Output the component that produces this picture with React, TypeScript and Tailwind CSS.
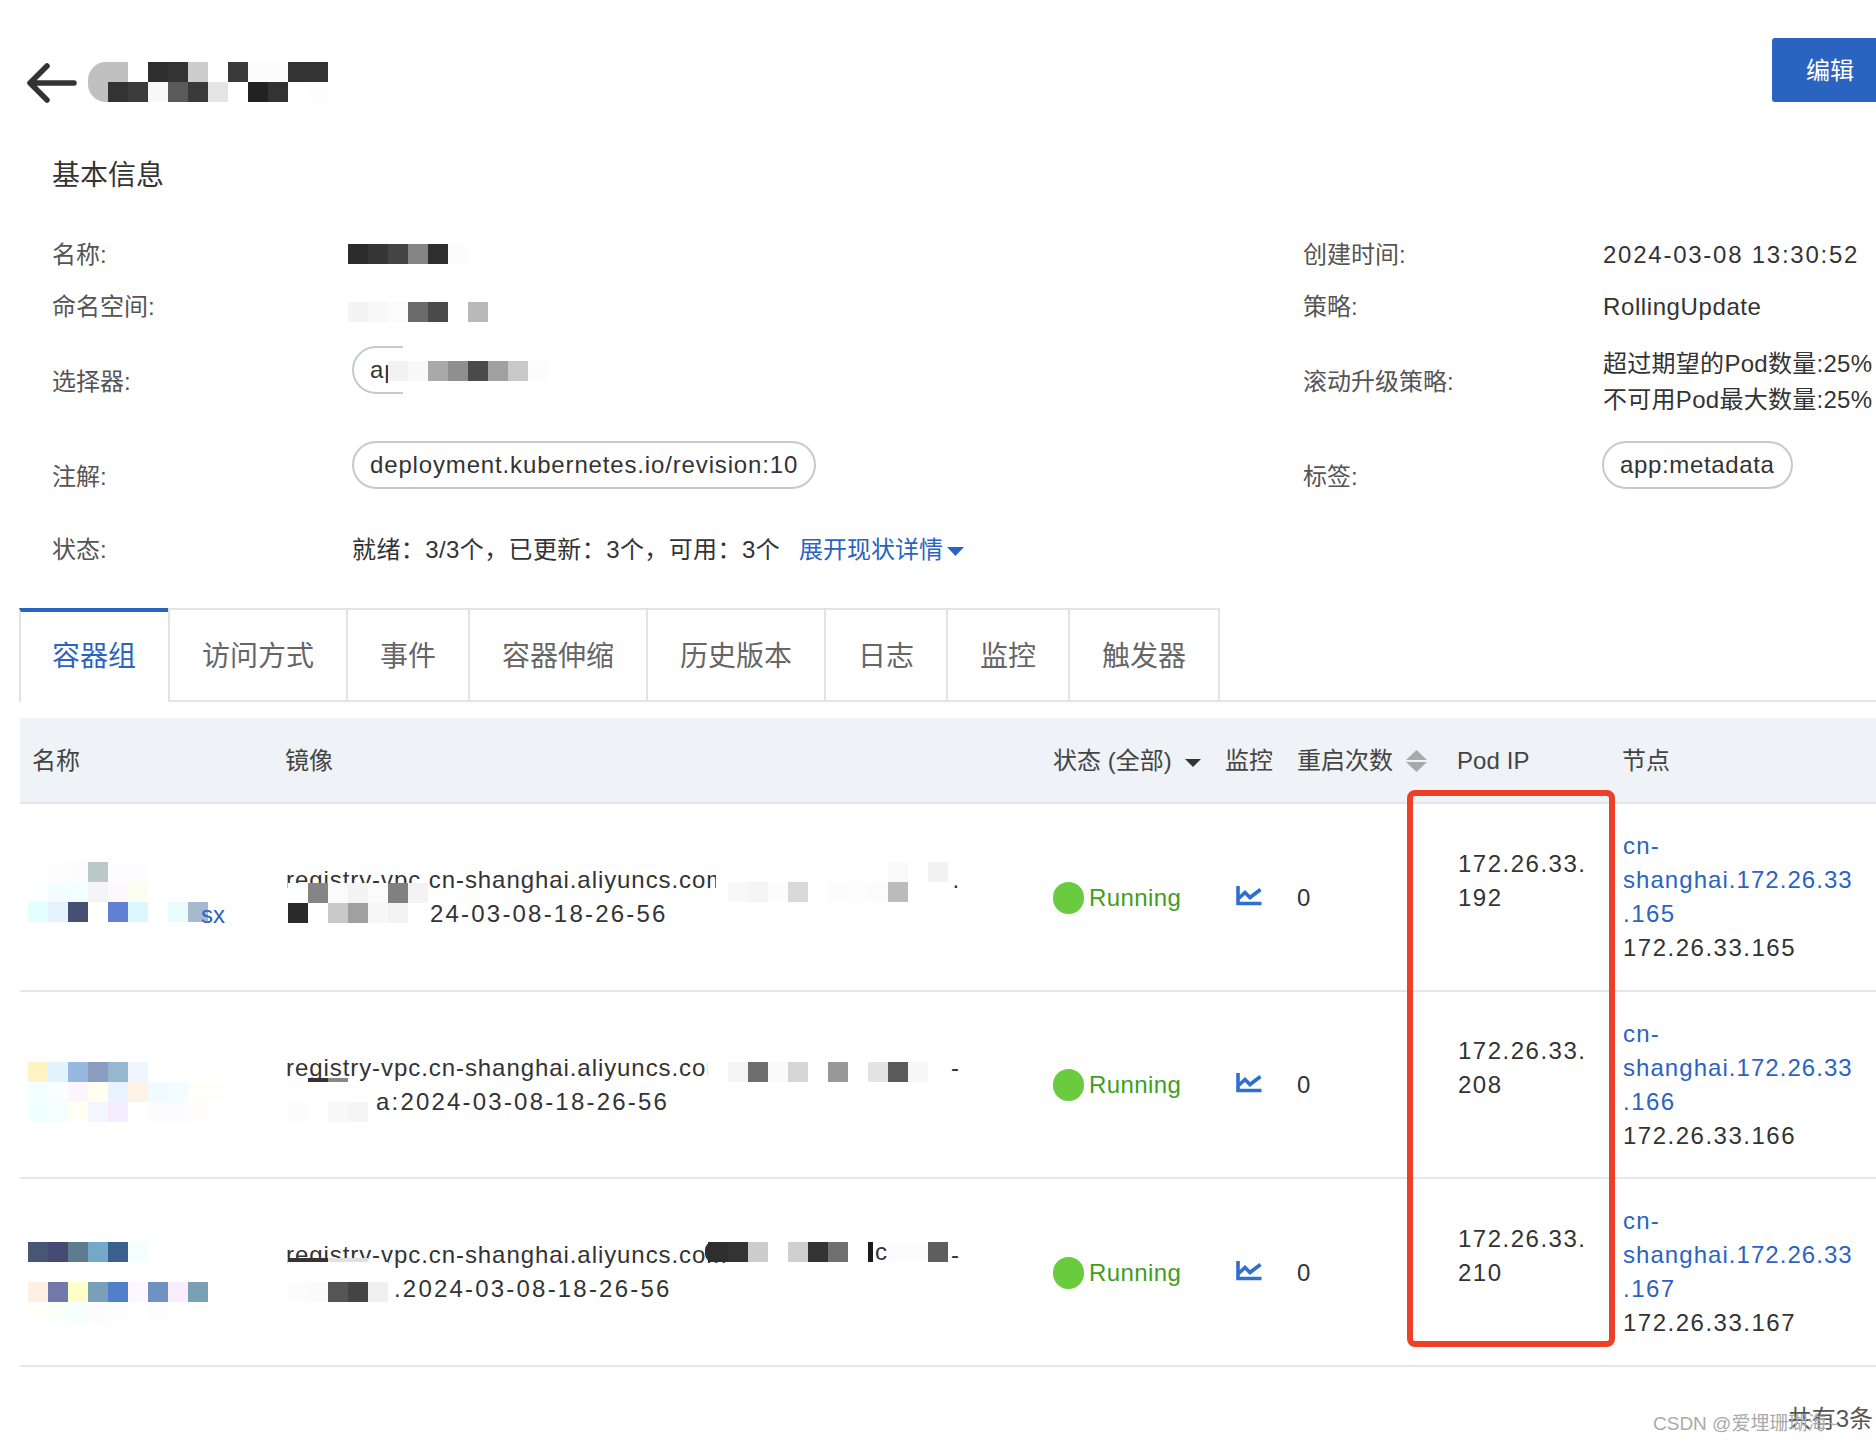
import type { ReactNode } from "react";

const BLUE = "text-[#2b63c1]";

const Mosaic = ({ rows, className }: { rows: string[][]; className: string }) => (
  <div className={className}>
    {rows.map((row, i) => (
      <div key={i} className="flex">
        {row.map((c, j) => (
          <div key={j} className="w-5 h-5 shrink-0" style={{ backgroundColor: c }} />
        ))}
      </div>
    ))}
  </div>
);

const Tag = ({ children, className = "" }: { children: ReactNode; className?: string }) => (
  <span className={`inline-flex items-center h-12 mb-[22px] px-4 rounded-full border-2 border-[#c6cad0] text-[#333] tracking-[0.85px] ${className}`}>
    {children}
  </span>
);

const Label = ({ children }: { children: ReactNode }) => <div className="pt-[2px] text-[#555]">{children}</div>;

const tabs = ["访问方式", "事件", "容器伸缩", "历史版本", "日志", "监控", "触发器"];

const ChartIcon = () => (
  <svg width="26" height="20" viewBox="0 0 26 20" fill="none" stroke="#2f6fce" strokeWidth="3.6">
    <path d="M2 0V17.5H25.5" />
    <path d="M2.5 12.5L9 6.5L14 11.5L24.5 3.5" />
  </svg>
);

const columns = "grid grid-cols-[266px_767px_172px_72px_160px_165px_254px]";

const PodRow = ({
  name,
  image,
  ip,
  node,
}: {
  name: ReactNode;
  image: ReactNode;
  ip: [string, string];
  node: string;
}) => (
  <div className={`${columns} h-[187.5px] border-b-2 border-[#e3e6ea] items-center`}>
    <div className="relative h-full">{name}</div>
    <div className="relative h-full pt-[1px] flex flex-col justify-center">{image}</div>
    <div className="flex items-center pt-[2px]">
      <span className="w-[31px] h-8 rounded-full bg-[#6acb3e]" />
      <span className="ml-[5px] text-[#3f9e1e] tracking-[0.4px]">Running</span>
    </div>
    <div className="pl-[11px] pb-[2px]">
      <ChartIcon />
    </div>
    <div className="pt-[2px] text-[#333]">0</div>
    <div className="pl-[1px] pb-[32px] text-[#333] tracking-[1.5px]">
      {ip[0]}
      <br />
      {ip[1]}
    </div>
    <div className="pl-[1px] pt-[1px]">
      <div className={`${BLUE} tracking-[1.2px]`}>cn-</div>
      <div className={`${BLUE} tracking-[1.05px]`}>shanghai.172.26.33</div>
      <div className={`${BLUE} tracking-[1.5px]`}>.{node}</div>
      <div className="text-[#333] tracking-[1.5px]">172.26.33.{node}</div>
    </div>
  </div>
);

const ImageLines = ({ end, tail, indent }: { end: string; tail: string; indent: string }) => (
  <>
    <div className="flex justify-between w-[674px] text-[#333] tracking-[0.93px]">
      <span>registry-vpc.cn-shanghai.aliyuncs.com</span>
      <span>{end}</span>
    </div>
    <div className={`${indent} text-[#333] tracking-[2.2px]`}>{tail}</div>
  </>
);

export default function App() {
  return (
    <div className="relative w-[1876px] h-[1442px] overflow-hidden bg-white text-[24px] leading-[34px] [font-family:'Liberation_Sans','Noto_Sans_CJK_SC',sans-serif]">
      {/* header */}
      <div className="flex justify-between h-[102px] pt-[38px]">
        <div className="flex pt-6 pl-[27px]">
          <svg width="50" height="40" viewBox="0 0 50 40" fill="none" stroke="#333" strokeWidth="5.5" strokeLinecap="round" strokeLinejoin="round" className="mt-[1px]">
            <path d="M20 3L3 20L20 37M3 20H47" />
          </svg>
          <Mosaic
            className="ml-[11px] overflow-hidden rounded-l-[18px]"
            rows={[
              ["#c0c0c0", "#c0c0c0", "#fff", "#2e2e2e", "#333", "#ccc", "#fff", "#3a3a3a", "#fcfcfc", "#fcfcfc", "#333", "#333"],
              ["#c0c0c0", "#333", "#3c3c3c", "#f8f8f8", "#5a5a5a", "#3a3a3a", "#e5e5e5", "#fff", "#222", "#333", "#fff", "#fdfdfd"],
            ]}
          />
        </div>
        <button className="w-[104px] h-16 pl-[34px] pt-[2px] text-left rounded-l-[3px] bg-[#2b63c1] text-white">编辑</button>
      </div>

      <div className="h-[126px] pt-[58px] pl-[52px] text-[28px] leading-8 text-[#333]">基本信息</div>

      {/* basic info */}
      <div className="grid grid-cols-[296px_955px_300px_1fr] grid-rows-[52px_52px_98px_92px_54px] items-center pl-[52px] h-[348px]">
        <Label>名称:</Label>
        <Mosaic className="" rows={[["#2b2b2b", "#363636", "#444", "#858585", "#2e2e2e", "#fcfcfc"]]} />
        <Label>创建时间:</Label>
        <div className="pt-[2px] text-[#333] tracking-[1.75px]">2024-03-08 13:30:52</div>

        <Label>命名空间:</Label>
        <Mosaic className="mt-3" rows={[["#f4f4f4", "#f8f8f8", "#fbfbfb", "#6b6b6b", "#4a4a4a", "#fff", "#b9b9b9"]]} />
        <Label>策略:</Label>
        <div className="pt-[2px] text-[#333] tracking-[0.6px]">RollingUpdate</div>

        <Label>选择器:</Label>
        <div className="relative pl-1">
          <Tag>app:metadata</Tag>
          <div className="absolute left-[55px] top-[-8px] w-[180px] h-[72px] bg-white" />
          <div className="absolute left-[40px] top-[15px] w-5 h-[30px] bg-white" />
          <Mosaic className="absolute left-[40px] top-[15px]" rows={[["#f2f2f2", "#f9f9f9", "#a9a9a9", "#8f8f8f", "#4a4a4a", "#a0a0a0", "#c9c9c9", "#fcfcfc"]]} />
        </div>
        <Label>滚动升级策略:</Label>
        <div className="pt-[2px] text-[#333] leading-[36px] tracking-[0.28px] whitespace-nowrap">
          超过期望的Pod数量:25%
          <br />
          不可用Pod最大数量:25%
        </div>

        <Label>注解:</Label>
        <div className="pl-1">
          <Tag>deployment.kubernetes.io/revision:10</Tag>
        </div>
        <Label>标签:</Label>
        <div className="-ml-[1px]">
          <Tag>
            <span className="tracking-[0.65px]">app:metadata</span>
          </Tag>
        </div>

        <Label>状态:</Label>
        <div className="pl-1 pt-[2px] flex items-center text-[#333] tracking-[0.4px]">
          就绪：3/3个，已更新：3个，可用：3个
          <span className={`ml-[19px] ${BLUE} tracking-normal`}>展开现状详情</span>
          <svg width="17" height="9" viewBox="0 0 17 9" className="ml-1 mt-[3px]">
            <path d="M0 0H17L8.5 9Z" fill="#2b63c1" />
          </svg>
        </div>
      </div>

      {/* tabs */}
      <div className="flex ml-[19px] mt-8 h-[94px] border-b-2 border-[#e3e3e3] text-[28px] text-[#666]">
        <div className={`h-[94px] pl-[31px] pr-8 border-l-2 border-l-[#e3e3e3] border-t-4 border-t-[#2b63c1] bg-white flex items-center ${BLUE}`}>容器组</div>
        {tabs.map((t) => (
          <div key={t} className="px-8 pt-1 flex items-center border-t-2 border-r-2 [&:nth-child(2)]:border-l-2 border-[#e3e3e3]">
            {t}
          </div>
        ))}
      </div>

      {/* table */}
      <div className="ml-5 mt-4">
        <div className={`${columns} h-[86px] pt-[2px] bg-[#eff2f7] border-b-2 border-[#e3e6ea] items-center text-[#444]`}>
          <div className="pl-3">名称</div>
          <div className="-ml-[1px]">镜像</div>
          <div className="flex items-center">
            状态 (全部)
            <svg width="16" height="8" viewBox="0 0 16 8" className="ml-[13px] mt-1">
              <path d="M0 0H16L8 8Z" fill="#333" />
            </svg>
          </div>
          <div>监控</div>
          <div className="flex items-center">
            重启次数
            <svg width="21" height="22" viewBox="0 0 21 22" className="ml-[13px]">
              <path d="M10.5 0L21 10H0Z" fill="#a9a9a9" />
              <path d="M0 12H21L10.5 22Z" fill="#a9a9a9" />
            </svg>
          </div>
          <div className="tracking-[0.1px]">Pod IP</div>
          <div>节点</div>
        </div>

        <PodRow
          ip={["172.26.33.", "192"]}
          node="165"
          name={
            <>
              <Mosaic
                className="absolute left-2 top-[58px]"
                rows={[
                  ["#fefefe", "#fdfdfd", "#fcfcfc", "#bcc7c7", "#fdfcfe", "#fdfcff"],
                  ["#fbfffe", "#f3fdff", "#f2feff", "#f5f5f5", "#fcf8fb", "#fbfdf0"],
                  ["#e3ffff", "#e6f3fc", "#474f75", "#fff", "#6080d4", "#def7ff", "#fff", "#e8fcff", "#a6b9d0"],
                ]}
              />
              <span className={`absolute left-[181px] top-[94px] ${BLUE}`}>sx</span>
            </>
          }
          image={
            <>
              <ImageLines end="." tail="24-03-08-18-26-56" indent="pl-[144px]" />
              <Mosaic
                className="absolute left-[2px] top-[79px]"
                rows={[
                  ["#fff", "#858585", "#fbfbfb", "#f3f3f3", "#fbfbfb", "#808080", "#f3f3f3"],
                  ["#2a2a2a", "#fff", "#c9c9c9", "#a0a0a0", "#f7f7f7", "#f3f3f3", "#fff"],
                ]}
              />
              <Mosaic
                className="absolute left-[430px] top-[58px] pl-3 bg-white"
                rows={[
                  ["#fff", "#fff", "#fff", "#fff", "#fff", "#fff", "#fff", "#fff", "#fafafa", "#fff", "#f2f2f2"],
                  ["#f8f8f8", "#f5f5f5", "#fcfcfc", "#d9d9d9", "#fff", "#fcfcfc", "#fdfdfd", "#fbfbfb", "#bbb", "#fff", "#fff"],
                ]}
              />
            </>
          }
        />

        <PodRow
          ip={["172.26.33.", "208"]}
          node="166"
          name={
            <Mosaic
              className="absolute left-2 top-[70px]"
              rows={[
                ["#fff3c4", "#e2f3fd", "#97b8e0", "#8b9dbe", "#97b6d0", "#f0f6ff", "#fefefe"],
                ["#f4ffff", "#f9ffff", "#fdf5ff", "#fffff0", "#e8f3ff", "#fff3e6", "#f0fbff", "#f3fdff", "#fdfff8", "#fefffb"],
                ["#f0ffff", "#f3ffff", "#fffff3", "#f3f5ff", "#f3edff", "#fff", "#fcfcfe", "#fcfcfe", "#fffdfc", "#fff"],
              ]}
            />
          }
          image={
            <>
              <ImageLines end="-" tail="a:2024-03-08-18-26-56" indent="pl-[90px]" />
              <div className="absolute left-[22px] top-[86px] flex h-1">
                <div className="w-5 bg-[#333]" />
                <div className="w-5 bg-[#888]" />
              </div>
              <Mosaic
                className="absolute left-[2px] top-[90px] bg-white"
                rows={[
                  ["#fff", "#fff", "#fff", "#fff"],
                  ["#fcfcfc", "#fff", "#f9f9f9", "#f5f5f5"],
                ]}
              />
              <Mosaic
                className="absolute left-[422px] top-[70px] pl-5 bg-white"
                rows={[["#f5f5f5", "#6e6e6e", "#fafafa", "#d6d6d6", "#fff", "#999", "#fff", "#e3e3e3", "#5a5a5a", "#f7f7f7", "#fff"]]}
              />
            </>
          }
        />

        <PodRow
          ip={["172.26.33.", "210"]}
          node="167"
          name={
            <Mosaic
              className="absolute left-2 top-[63px]"
              rows={[
                ["#465674", "#454a72", "#5f7b8f", "#74aac8", "#3d5f8c", "#f3ffff"],
                ["#fff"],
                ["#fff0e3", "#7179a8", "#ffffc8", "#7a9fb8", "#5080cc", "#fdf8ff", "#7092c2", "#fdecfb", "#79a0b3"],
                ["#fffef8", "#fafff8", "#f5ffff", "#fefbff", "#fdfdff", "#fff", "#fdfdff", "#fff"],
              ]}
            />
          }
          image={
            <>
              <ImageLines end="-" tail=".2024-03-08-18-26-56" indent="pl-[108px]" />
              <div className="absolute left-[2px] top-[79px] flex h-1">
                <div className="w-10 bg-[#333]" />
                <div className="w-10 bg-[#e0e0e0]" />
              </div>
              <Mosaic
                className="absolute left-[2px] top-[83px] bg-white"
                rows={[
                  ["#fff", "#fff", "#fff", "#fff", "#fff"],
                  ["#fcfcfc", "#fafafa", "#555", "#444", "#f0f0f0"],
                ]}
              />
              <div className="absolute left-[419px] top-[63px] w-2 h-5 rounded-l-lg bg-[#2e2e2e]" />
              <Mosaic
                className="absolute left-[422px] top-[63px] bg-white"
                rows={[["#2e2e2e", "#333", "#ccc", "#fff", "#d0d0d0", "#333", "#707070", "#fff", "#fff", "#fcfcfc", "#fcfcfc", "#5e5e5e"]]}
              />
              <div className="absolute left-[582px] top-[63px] w-[5px] h-5 bg-[#1a1a1a]" />
              <span className="absolute left-[589px] top-[56px] text-[#333]">c</span>
            </>
          }
        />
      </div>

      <div className="flex justify-end pt-9 pr-[3px] leading-8 text-[#555]">共有3条</div>

      {/* annotation and watermark */}
      <div className="absolute left-[1407px] top-[790px] w-[208px] h-[557px] border-[6px] border-[#ee4027] rounded-lg" />
      <div className="absolute left-[1653px] top-[1412px] text-[19px] leading-6 text-[#aaa] whitespace-nowrap">CSDN @爱埋珊瑚海~</div>
    </div>
  );
}
